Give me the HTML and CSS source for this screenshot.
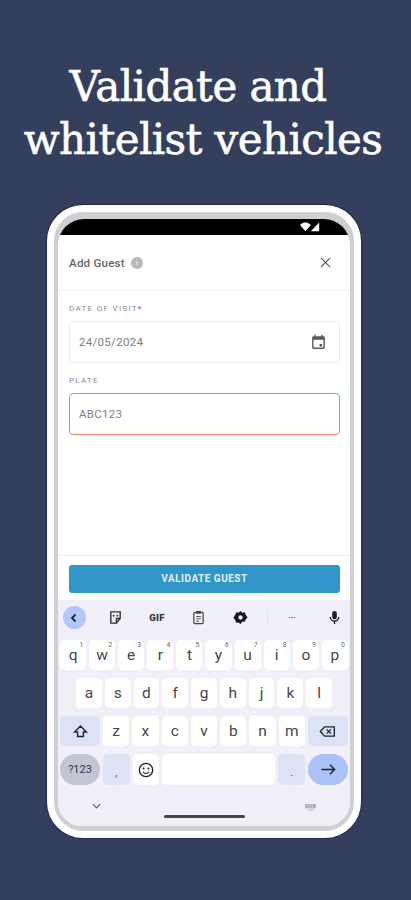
FILE: index.html
```html
<!DOCTYPE html>
<html lang="en">
<head>
<meta charset="utf-8">
<title>Validate and whitelist vehicles</title>
<link rel="stylesheet" href="styles.css">
</head>
<body>
<main class="page">
  <h1 class="headline"><span class="headline-first">Validate and</span><br>whitelist vehicles</h1>
  <div class="phone">
    <div class="screen">
      <div class="statusbar">
        <svg class="status-icon" viewBox="0 0 24 12" aria-hidden="true"><path d="M0 3.5C2.5 1.2 5 .5 6.5.5S10.5 1.2 13 3.500L6.500 11z" fill="#fff"/><path d="M23 .5V11H13z" fill="#fff"/></svg>
      </div>
      <header class="modal-head">
        <div class="modal-title">
          <span>Add Guest</span>
          <span class="info"><i>i</i></span>
        </div>
        <svg class="close" viewBox="0 0 12 12" aria-hidden="true"><path d="M1 1l10 10M11 1L1 11"/></svg>
      </header>
      <section class="form">
        <label class="label">DATE OF VISIT<b>*</b></label>
        <div class="field">
          <span>24/05/2024</span>
          <svg class="cal" viewBox="0 0 24 24" aria-hidden="true"><path d="M17 14h-3.500v3.500H17V14zM16 1v2H8V1H6v2H5c-1.110 0-1.990.9-1.990 2L3 19c0 1.100.89 2 2 2h14c1.100 0 2-.9 2-2V5c0-1.100-.9-2-2-2h-1V1h-2zm3 18H5V8h14v11z"/></svg>
        </div>
        <label class="label label-plate">PLATE</label>
        <div class="field field-active"><span>ABC123</span></div>
      </section>
      <div class="action">
        <button class="validate" type="button">VALIDATE GUEST</button>
      </div>
      <section class="keyboard">
        <div class="toolbar">
          <span class="tool tool-back"><svg viewBox="0 0 12 12" aria-hidden="true"><path d="M7.500 2.500L4 6l3.500 3.500" fill="none" stroke="#1f2430" stroke-width="1.800"/></svg></span>
          <svg class="tool-icon" viewBox="0 0 16 16" aria-hidden="true"><path d="M3 2h10v7l-4 5H3z" fill="none" stroke="#333" stroke-width="1.500"/><path d="M9 14V9h4" fill="none" stroke="#333" stroke-width="1.500"/><circle cx="6" cy="6" r="1" fill="#333"/><circle cx="10" cy="6" r="1" fill="#333"/></svg>
          <span class="gif">GIF</span>
          <svg class="tool-icon" viewBox="0 0 16 16" aria-hidden="true"><rect x="3" y="2.500" width="10" height="12" rx="1.200" fill="none" stroke="#444" stroke-width="1.300"/><rect x="5.500" y="1" width="5" height="3" fill="#444"/><path d="M5.500 7h5M5.500 9.500h5M5.500 12h3" stroke="#444"/></svg>
          <svg class="tool-icon" viewBox="0 0 16 16" aria-hidden="true"><path d="M8 1l2 1.800 2.600-.4.800 2.500L15.500 8l-2.100 2.100-.8 2.500-2.600-.4L8 15l-2-1.800-2.600.4-.8-2.500L.5 8l2.100-3.100.8-2.500 2.600.4z" fill="#15171c"/><circle cx="8" cy="8" r="2.300" fill="#f1f0f8"/></svg>
          <span class="tool-sep"></span>
          <span class="dots">&#8226;&#8226;&#8226;</span>
          <svg class="tool-icon tool-mic" viewBox="0 0 16 16" aria-hidden="true"><rect x="5.500" y="1" width="5" height="9" rx="2.500" fill="#1d2027"/><path d="M3.500 7.500a4.500 4.500 0 0 0 9 0M8 12v3" fill="none" stroke="#1d2027" stroke-width="1.400"/></svg>
        </div>
        <div class="keys">
          <div class="row">
            <span class="key">q<sup>1</sup></span><span class="key">w<sup>2</sup></span><span class="key">e<sup>3</sup></span><span class="key">r<sup>4</sup></span><span class="key">t<sup>5</sup></span><span class="key">y<sup>6</sup></span><span class="key">u<sup>7</sup></span><span class="key">i<sup>8</sup></span><span class="key">o<sup>9</sup></span><span class="key">p<sup>0</sup></span>
          </div>
          <div class="row row-mid">
            <span class="key">a</span><span class="key">s</span><span class="key">d</span><span class="key">f</span><span class="key">g</span><span class="key">h</span><span class="key">j</span><span class="key">k</span><span class="key">l</span>
          </div>
          <div class="row">
            <span class="key key-mod key-wide"><svg viewBox="0 0 18 18" aria-hidden="true"><path d="M9 2.500L16 9.500h-3.500V15h-7V9.500H2z" fill="none" stroke="#1f2430" stroke-width="1.700"/></svg></span>
            <span class="key">z</span><span class="key">x</span><span class="key">c</span><span class="key">v</span><span class="key">b</span><span class="key">n</span><span class="key">m</span>
            <span class="key key-mod key-wide"><svg viewBox="0 0 20 16" aria-hidden="true"><path d="M6.500 2.500H18v11H6.500L1.500 8z" fill="none" stroke="#1f2430" stroke-width="1.600"/><path d="M9 5.500l5 5M14 5.500l-5 5" stroke="#1f2430" stroke-width="1.600"/></svg></span>
          </div>
          <div class="row row-last">
            <span class="key key-num key-wide">?123</span>
            <span class="key key-mod key-punct">,</span>
            <span class="key"><svg class="emoji" viewBox="0 0 16 16" aria-hidden="true"><circle cx="8" cy="8" r="6.700" fill="none" stroke="#222" stroke-width="1.300"/><circle cx="5.600" cy="6.500" r="1" fill="#222"/><circle cx="10.400" cy="6.500" r="1" fill="#222"/><path d="M4.800 9.800c1.600 2.200 4.800 2.200 6.400 0" fill="none" stroke="#222" stroke-width="1.100"/></svg></span>
            <span class="key key-space"></span>
            <span class="key key-mod key-punct">.</span>
            <span class="key key-enter key-wide"><svg viewBox="0 0 18 14" aria-hidden="true"><path d="M1.500 7h14M10.500 2l5 5-5 5" fill="none" stroke="#1f2430" stroke-width="1.500"/></svg></span>
          </div>
        </div>
        <div class="navbar">
          <svg class="nav-chevron" viewBox="0 0 10 6" aria-hidden="true"><path d="M1 1l4 4 4-4" fill="none" stroke="#5d5f68" stroke-width="1.300"/></svg>
          <svg class="nav-kb" viewBox="0 0 14 9" aria-hidden="true"><path d="M1 1h12v5H1z" fill="#a9aab2"/><path d="M4 7.800h6" stroke="#a9aab2"/><path d="M3 2.500h8M3 4.500h8" stroke="#f1f0f8" stroke-dasharray="1 1"/></svg>
          <span class="home-pill"></span>
        </div>
      </section>
    </div>
  </div>
</main>
</body>
</html>
```

FILE: styles.css
```css
* { box-sizing: border-box; }
html, body { margin: 0; padding: 0; }
body {
  width: 411px;
  height: 900px;
  overflow: hidden;
  background: #333f5c;
  font-family: Roboto, "Liberation Sans", sans-serif;
}
.page {
  display: flex;
  flex-direction: column;
  align-items: center;
  height: 900px;
}
.headline {
  margin: 60px 0 0 -5px;
  color: #fff;
  font-family: "DejaVu Serif", serif;
  font-weight: 400;
  font-size: 42px;
  line-height: 53px;
  letter-spacing: -0.6px;
  -webkit-text-stroke: 0.6px #fff;
  text-align: center;
  white-space: nowrap;
  height: 106px;
}
.headline-first { display: inline-block; padding-right: 10px; }
.phone {
  margin: 39px 3px 0 0;
  width: 314px;
  height: 633px;
  border: 7px solid #fff;
  border-radius: 36px;
  background: #cfd0d4;
  padding: 7px 4px 5px;
  box-shadow: 0 0 0 1px #1c2754;
}
.screen {
  height: 100%;
  display: flex;
  flex-direction: column;
  background: #fff;
  border-radius: 26px 26px 24px 24px;
  overflow: hidden;
}
.statusbar {
  flex: none;
  height: 16px;
  background: #000;
  display: flex;
  justify-content: flex-end;
  align-items: center;
  padding-right: 29px;
}
.status-icon { width: 22px; height: 10px; }
.modal-head {
  flex: none;
  height: 56px;
  display: flex;
  align-items: center;
  justify-content: space-between;
  padding: 0 19px 0 11px;
  border-bottom: 1px solid #efefef;
}
.modal-title {
  display: flex;
  align-items: center;
  gap: 6px;
  font-size: 11.500px;
  letter-spacing: 0.25px;
  font-weight: 500;
  color: #666;
}
.info {
  width: 12px;
  height: 12px;
  border-radius: 50%;
  background: #b8b8b8;
  color: #e4e4e4;
  display: flex;
  align-items: center;
  justify-content: center;
}
.info i { font-size: 8px; font-style: normal; font-weight: 700; }
.close { width: 11px; height: 11px; stroke: #555; stroke-width: 1.300; fill: none; }
.form {
  flex: 1;
  padding: 12px 10px 0 11px;
}
.label {
  display: block;
  height: 11px;
  font-size: 8px;
  line-height: 11px;
  letter-spacing: 1.300px;
  color: #8b8b8b;
}
.label b { color: #e2533c; font-weight: 700; }
.label-plate { margin-top: 12px; }
.field {
  margin-top: 7px;
  height: 42px;
  display: flex;
  align-items: center;
  justify-content: space-between;
  padding: 0 12px 0 9px;
  border: 1px solid #ececec;
  border-radius: 4px;
  font-size: 11.500px;
  color: #808080;
  letter-spacing: 0.3px;
}
.field-active { border: 1.500px solid #ec8360; }
.cal { width: 17px; height: 17px; fill: #5a5a5a; }
.action {
  flex: none;
  height: 45px;
  padding: 9px 10px 0 11px;
  border-top: 1px solid #efefef;
}
.validate {
  display: block;
  width: 100%;
  height: 28px;
  border: 0;
  border-radius: 3px;
  background: #3096c8;
  color: #e3f1f8;
  font-family: inherit;
  font-size: 10px;
  font-weight: 700;
  letter-spacing: 0.5px;
  padding: 0 0 2px;
}
.keyboard {
  flex: none;
  height: 226px;
  background: #f1f0f8;
  display: flex;
  flex-direction: column;
}
.toolbar {
  flex: none;
  height: 35px;
  display: grid;
  grid-template-columns: 24px 58px 26px 56px 28px 26px 24px 38px;
  align-items: center;
  justify-items: center;
  padding-left: 4px;
}
.tool {
  width: 23px;
  height: 23px;
  border-radius: 50%;
  display: flex;
  align-items: center;
  justify-content: center;
}
.tool-back { background: #b3c7fa; }
.tool-back svg { width: 12px; height: 12px; }
.tool-icon { width: 15px; height: 15px; }
.tool-mic { justify-self: end; }
.gif { font-size: 9.500px; font-weight: 900; color: #30333a; letter-spacing: 0.3px; }
.tool-sep { width: 1px; height: 16px; background: #e0e0e6; }
.dots { font-size: 6px; color: #30333a; letter-spacing: 0.5px; }
.keys {
  flex: none;
  display: flex;
  flex-direction: column;
  gap: 8px;
  padding: 5px 2px 0;
}
.row {
  display: flex;
  gap: 3px;
  height: 30px;
}
.row-mid { padding: 0 16px; }
.row-last { height: 31px; }
.key {
  position: relative;
  flex: 1 1 0;
  min-width: 0;
  display: flex;
  align-items: center;
  justify-content: center;
  background: #fff;
  border-radius: 5px;
  font-size: 15.500px;
  color: #45454a;
}
.key sup {
  position: absolute;
  top: 1px;
  right: 3px;
  font-size: 7px;
  line-height: 8px;
  color: #6a6a70;
}
.key svg { width: 17px; height: 15px; }
.key .emoji { width: 16px; height: 16px; }
.key-wide { flex: 0 0 40px; }
.key-mod { background: #dde3f6; }
.key-num {
  background: #c2c5d4;
  border-radius: 16px;
  font-size: 11px;
  color: #33363e;
}
.key-punct { align-items: flex-end; padding-bottom: 6px; font-size: 11px; color: #555; }
.key-space { flex: 0 0 113px; }
.key-enter { background: #aac2f8; border-radius: 16px; }
.navbar {
  position: relative;
  flex: 1;
  display: flex;
  justify-content: space-between;
  align-items: flex-start;
  padding: 18px 33px 0 34px;
}
.nav-chevron { width: 9px; height: 6px; }
.nav-kb { width: 13px; height: 8px; }
.home-pill {
  position: absolute;
  left: 106px;
  bottom: 8px;
  width: 81px;
  height: 3px;
  border-radius: 2px;
  background: #45464d;
}
```
